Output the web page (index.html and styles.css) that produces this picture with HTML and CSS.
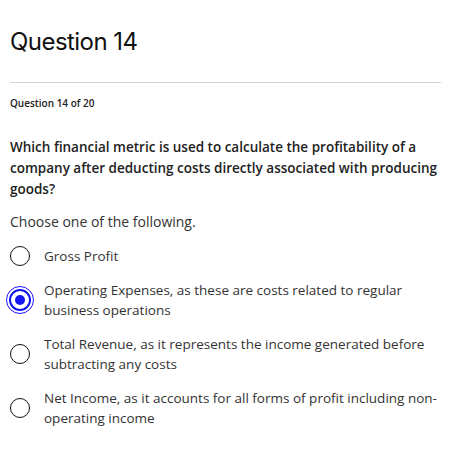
FILE: index.html
```html
<!DOCTYPE html>
<html>
<head>
<meta charset="utf-8">
<link rel="stylesheet" href="styles.css">
</head>
<body>
<main class="page">
  <h1 class="title">Question 14</h1>
  <hr class="divider">
  <div class="counter">Question 14 of 20</div>
  <p class="question">Which financial metric is used to calculate the profitability of a company after deducting costs directly associated with producing goods?</p>
  <p class="instruction">Choose one of the following.</p>
  <ul class="options">
    <li class="option">
      <span class="radio"></span>
      <span class="label">Gross Profit</span>
    </li>
    <li class="option selected">
      <span class="radio"><span class="dot"></span></span>
      <span class="label">Operating Expenses, as these are costs related to regular business operations</span>
    </li>
    <li class="option">
      <span class="radio"></span>
      <span class="label">Total Revenue, as it represents the income generated before subtracting any costs</span>
    </li>
    <li class="option">
      <span class="radio"></span>
      <span class="label">Net Income, as it accounts for all forms of profit including non-operating income</span>
    </li>
  </ul>
</main>
</body>
</html>
```
FILE: styles.css
```css
html, body {
  margin: 0;
  padding: 0;
  background: #ffffff;
}
.page {
  padding: 0 8px 0 10px;
  font-family: "Open Sans", "Liberation Sans", sans-serif;
  color: #2b2b2b;
}
.title {
  font-family: Inter, "Liberation Sans", sans-serif;
  font-weight: 400;
  font-size: 24px;
  line-height: 29px;
  letter-spacing: -0.55px;
  color: #111;
  margin: 0;
  padding-top: 27px;
}
.divider {
  border: 0;
  border-top: 1px solid #d4d4d4;
  margin: 26px 0 0 0;
}
.counter {
  font-size: 10px;
  font-weight: 600;
  line-height: 16px;
  margin-top: 12px;
  color: #222;
}
.question {
  font-size: 13.5px;
  font-weight: 600;
  line-height: 21px;
  margin: 26px 0 0 0;
  color: #222;
}
.instruction {
  font-size: 14px;
  line-height: 20px;
  margin: 12px 0 0 0;
  color: #333;
}
.options {
  list-style: none;
  margin: 14px 0 0 0;
  padding: 0;
  display: flex;
  flex-direction: column;
  gap: 14px;
}
.option {
  display: flex;
  align-items: center;
  gap: 14px;
  font-size: 13.5px;
  line-height: 20px;
  color: #333;
}
.radio {
  flex: none;
  box-sizing: border-box;
  width: 20px;
  height: 20px;
  border: 1.5px solid #111;
  border-radius: 50%;
  display: flex;
  align-items: center;
  justify-content: center;
}
.selected .radio {
  width: 28px;
  height: 28px;
  margin-left: -4px;
  margin-right: -4px;
  border: 1.5px solid #1515f0;
  padding: 2px;
}
.selected .radio .dot {
  box-sizing: border-box;
  width: 100%;
  height: 100%;
  border-radius: 50%;
  border: 2px solid #1515f0;
  display: flex;
  align-items: center;
  justify-content: center;
}
.selected .radio .dot::after {
  content: "";
  width: 10px;
  height: 10px;
  border-radius: 50%;
  background: #1515f0;
}
.label {
  flex: 1;
}
```
